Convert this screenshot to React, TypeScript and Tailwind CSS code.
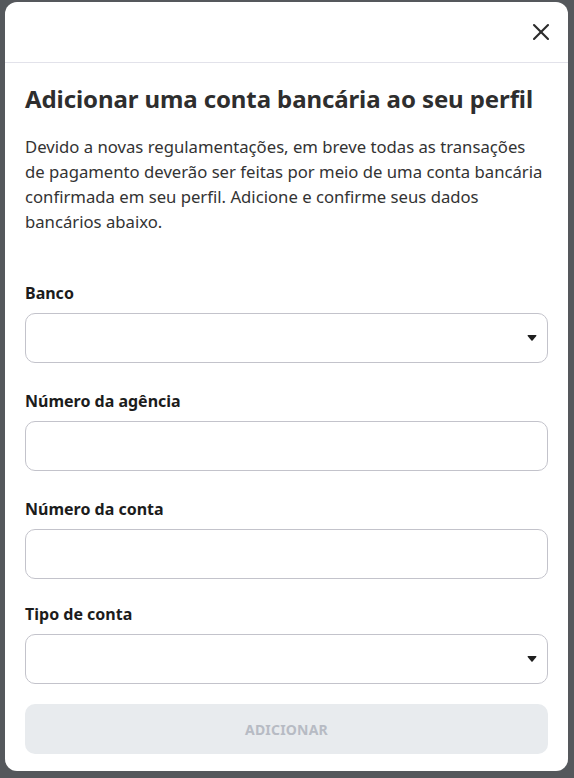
import { X } from "lucide-react";

const fields = [
  { label: "Banco", select: true },
  { label: "Número da agência", select: false },
  { label: "Número da conta", select: false },
  { label: "Tipo de conta", select: true },
];

function Caret() {
  return (
    <svg width="10" height="7" viewBox="0 0 10 7" className="absolute right-[10px] top-1/2 -translate-y-1/2">
      <path d="M0.5 1.2 Q0.5 0.5 1.3 0.5 H8.7 Q9.5 0.5 9.5 1.2 L5.6 5.9 Q5 6.5 4.4 5.9 Z" fill="#1f1f1f" />
    </svg>
  );
}

export default function App() {
  return (
    <div
      className="w-[574px] h-[778px] bg-[#55585c] pt-[2px] pl-[5px]"
      style={{ fontFamily: '"Noto Sans", "Open Sans", sans-serif' }}
    >
      <div className="w-[563px] h-[769px] bg-white rounded-[12px] flex flex-col overflow-hidden">
        {/* Header */}
        <div className="h-[61px] border-b border-[#e2e2ea] flex items-center justify-end pr-[13px] shrink-0">
          <button className="text-[#2b2b2b]">
            <X className="w-[28px] h-[28px]" strokeWidth={1.8} />
          </button>
        </div>

        <div className="px-[20px] pt-[20px] flex flex-col">
          <h1 className="text-[24px] leading-[32px] font-bold text-[#2e2e2e] tracking-[-0.1px]">
            Adicionar uma conta bancária ao seu perfil
          </h1>
          <p className="mt-[19px] text-[16.7px] leading-[25px] text-[#333333]">
            Devido a novas regulamentações, em breve todas as transações
            <br />
            de pagamento deverão ser feitas por meio de uma conta bancária
            <br />
            confirmada em seu perfil. Adicione e confirme seus dados
            <br />
            bancários abaixo.
          </p>

          <div className="mt-[47px] flex flex-col">
            {fields.map((f, i) => (
              <div key={f.label} className={i === 0 ? "" : i === 3 ? "mt-[23px]" : "mt-[26px]"}>
                <div className="text-[16px] leading-[24px] font-bold text-[#1c1c1c]">{f.label}</div>
                <div className="relative mt-[8px] h-[50px] rounded-[10px] border border-[#c3c3cb] bg-white">
                  {f.select && <Caret />}
                </div>
              </div>
            ))}
          </div>

          <button className="mt-[20px] h-[50px] rounded-[10px] bg-[#e8ebee] text-[14px] font-bold text-[#b7bbc4] tracking-[0.2px]">
            ADICIONAR
          </button>
        </div>
      </div>
    </div>
  );
}
